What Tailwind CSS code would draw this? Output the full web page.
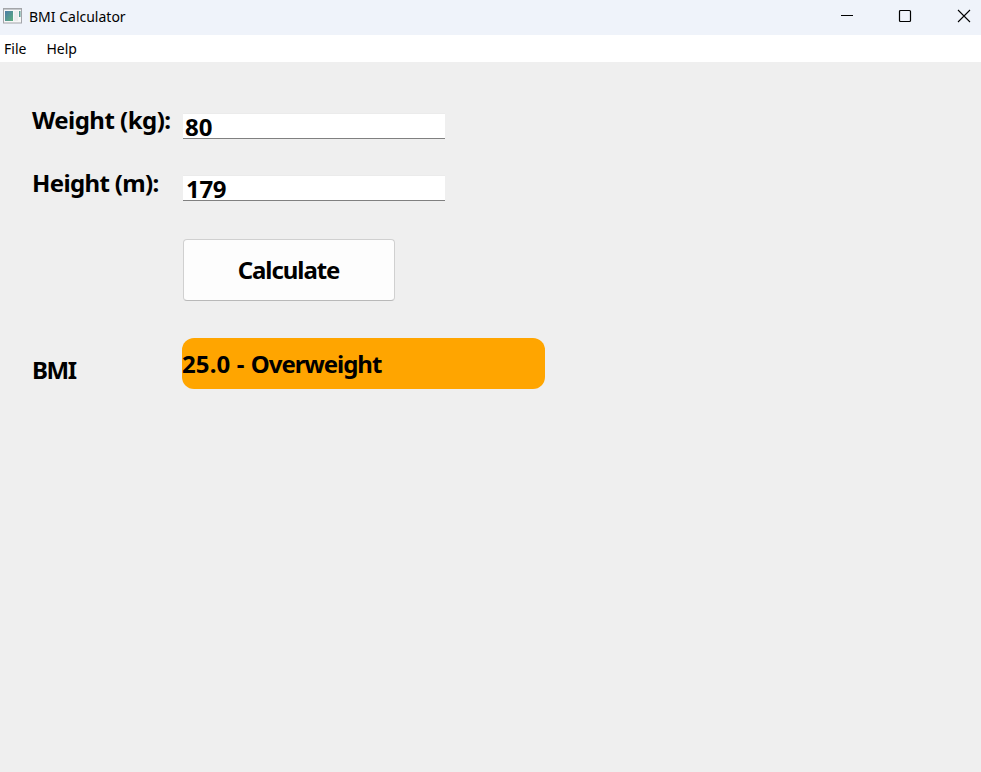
<!DOCTYPE html>
<html lang="en">
<head>
<meta charset="utf-8">
<title>BMI Calculator</title>
<script src="https://cdn.jsdelivr.net/npm/@tailwindcss/browser@4"></script>
</head>
<body class="flex h-screen flex-col overflow-hidden bg-[#efefef] font-['Noto_Sans',sans-serif] text-black">
  <header class="flex h-[35px] shrink-0 items-center bg-[#eff3fa] pl-[3px]">
    <svg class="mb-[3px] h-4 w-[19px]" viewBox="0 0 19 16">
      <defs><linearGradient id="g" x1="0" y1="0" x2="1" y2="1"><stop offset="0" stop-color="#4b7ba8"/><stop offset="1" stop-color="#5cae7d"/></linearGradient></defs>
      <rect x=".5" y=".5" width="18" height="14.5" fill="#f7f7f7" stroke="#a3a5a9"/>
      <path d="M1 1.5h17" stroke="#c5c8cc"/>
      <rect x="2" y="3" width="8" height="10" fill="url(#g)"/>
      <rect x="11" y="3" width="4" height="10" fill="#ececee"/>
      <rect x="16" y="3" width="1.5" height="6" fill="#5b9c93"/>
    </svg>
    <h1 class="ml-[7px] text-[14px] leading-5 mb-[2px]">BMI Calculator</h1>
    <div class="mb-[3px] ml-auto mr-[10px] flex items-center gap-[45px]">
      <svg class="-mr-px h-[14px] w-[14px]" viewBox="0 0 14 14" fill="none" stroke="#000"><path d="M1 6.5h12"/></svg>
      <svg class="h-[14px] w-[14px]" viewBox="0 0 14 14" fill="none" stroke="#000" stroke-width="1.2"><rect x="1.5" y="1.5" width="11" height="11" rx="1"/></svg>
      <svg class="h-[14px] w-[14px]" viewBox="0 0 14 14" fill="none" stroke="#000" stroke-width="1.1"><path d="M1 1l12 12M13 1L1 13"/></svg>
    </div>
  </header>
  <nav class="flex h-[27px] shrink-0 items-center gap-[20px] bg-white pl-1 text-[14px]">
    <span>File</span><span>Help</span>
  </nav>
  <main class="flex flex-col pl-[32px] text-[24px] font-bold leading-[32px]">
    <div class="mt-[42px] flex h-[35px] w-[413px] items-end">
      <label class="mb-[3px] w-[151px] whitespace-nowrap tracking-[-0.52px]">Weight (kg):</label>
      <div class="h-[26px] w-[262px] border-t border-b border-t-[#ebebeb] border-b-[#808080] bg-white pl-[2px] leading-[26px]">80</div>
    </div>
    <div class="mt-[27px] flex h-[35px] w-[413px] items-end">
      <label class="mb-[2px] w-[151px] whitespace-nowrap tracking-[-0.65px]">Height (m):</label>
      <div class="h-[26px] w-[262px] border-t border-b border-t-[#ebebeb] border-b-[#808080] bg-white pl-[3px] tracking-[-0.3px] leading-[26px]">179</div>
    </div>
    <button class="ml-[151px] mt-[38px] h-[62px] w-[212px] rounded-[4px] border border-[#d0d0d0] border-b-[#b9b9b9] bg-[#fdfdfd] pr-[1px] tracking-[-1.05px]">Calculate</button>
    <div class="mt-[37px] flex h-[51px] items-end">
      <span class="mb-[3px] w-[150px] tracking-[-1.4px]">BMI</span>
      <div class="h-[51px] w-[363px] rounded-[12px] bg-[#ffa500] leading-[52px] tracking-[0.1px]">25.0 - <span class="tracking-[-1.05px]">Overweight</span></div>
    </div>
  </main>
</body>
</html>
